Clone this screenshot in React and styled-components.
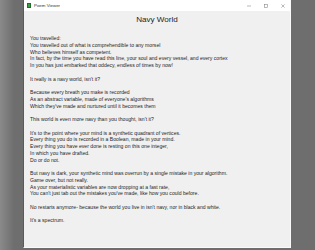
import styled, { createGlobalStyle } from "styled-components";

const GlobalStyle = createGlobalStyle`
  html, body {
    margin: 0;
    padding: 0;
    overflow: hidden;
  }
  body {
    font-family: "Liberation Sans", Arial, sans-serif;
  }
`

const Desktop = styled.div`
  width: 315px;
  height: 250px;
  display: flex;
  align-items: flex-start;
  background: linear-gradient(90deg, #8a8a8a 0px, #6e6e6e 14px, #6e6e6e 100%);
`

const Window = styled.div`
  margin-left: 23px;
  width: 268px;
  height: 248px;
  display: flex;
  flex-direction: column;
  background: #f0f0f0;
  box-sizing: border-box;
  border-right: 1px solid #fafafa;
  border-bottom: 1px solid #fafafa;
  border-left: 1px solid #5a5a5a;
`

const TitleBar = styled.div`
  height: 11px;
  flex: none;
  background: #ffffff;
  display: flex;
  align-items: center;
  padding-left: 3px;
  gap: 3px;
`

const AppIcon = styled.span`
  width: 4px;
  height: 5px;
  background: #3d9b45;
  border: 0.5px solid #1f6e2a;
  box-sizing: border-box;
`

const WindowTitle = styled.span`
  font-size: 4.4px;
  color: #333;
  flex: 1;
`

const Controls = styled.div`
  display: flex;
  align-items: center;
  height: 100%;
  margin-right: -1px;
`

const ControlButton = styled.span`
  width: 17px;
  height: 100%;
  display: flex;
  align-items: center;
  justify-content: center;
`

const Content = styled.div`
  flex: 1;
  padding: 4px 6px 0 6px;
  display: flex;
  flex-direction: column;
`

const Heading = styled.h1`
  margin: 0 0 10px 0;
  font-size: 8.1px;
  line-height: 10px;
  font-weight: normal;
  color: #1e1e1e;
  text-align: center;
`

const Poem = styled.div`
  font-size: 5.1px;
  line-height: 6.76px;
  color: #1e1e1e;
  white-space: pre;
`

const Line = styled.div`
  height: 6.76px;
`

const lines = [
  "You travelled:",
  "You travelled out of what is comprehendible to any morsel",
  "Who believes himself as competent.",
  "In fact, by the time you have read this line, your soul and every vessel, and every cortex",
  "In you has just embarked that oddecy, endless of times by now!",
  "",
  "It really is a navy world, isn't it?",
  "",
  "Because every breath you make is recorded",
  "As an abstract variable, made of everyone's algorithms",
  "Which they've made and nurtured until it becomes them",
  "",
  "This world is even more navy than you thought, isn't it?",
  "",
  "It's to the point where your mind is a synthetic quadrant of vertices.",
  "Every thing you do is recorded in a Boolean, made in your mind.",
  "Every thing you have ever done is resting on this one integer,",
  "In which you have drafted.",
  "Do or do not.",
  "",
  "But navy is dark, your synthetic mind was overrun by a single mistake in your algorithm.",
  "Game over, but not really.",
  "As your materialistic variables are now dropping at a fast rate,",
  "You can't just tab out the mistakes you've made, like how you could before.",
  "",
  "No restarts anymore- because the world you live in isn't navy, nor in black and white.",
  "",
  "It's a spectrum.",
]

function MinimizeIcon() {
  return (
    <svg width="4" height="4" viewBox="0 0 10 10">
      <line x1="0" y1="5" x2="10" y2="5" stroke="#8a8a8a" strokeWidth="1.5" />
    </svg>
  )
}

function MaximizeIcon() {
  return (
    <svg width="4" height="4" viewBox="0 0 10 10">
      <rect x="1" y="1" width="8" height="8" fill="none" stroke="#8a8a8a" strokeWidth="1.5" />
    </svg>
  )
}

function CloseIcon() {
  return (
    <svg width="4" height="4" viewBox="0 0 10 10">
      <path d="M1 1 L9 9 M9 1 L1 9" stroke="#8a8a8a" strokeWidth="1.5" />
    </svg>
  )
}

function App() {
  return (
    <Desktop>
      <GlobalStyle />
      <Window>
        <TitleBar>
          <AppIcon />
          <WindowTitle>Poem Viewer</WindowTitle>
          <Controls>
            <ControlButton><MinimizeIcon /></ControlButton>
            <ControlButton><MaximizeIcon /></ControlButton>
            <ControlButton><CloseIcon /></ControlButton>
          </Controls>
        </TitleBar>
        <Content>
          <Heading>Navy World</Heading>
          <Poem>
            {lines.map((l, i) => (
              <Line key={i}>{l}</Line>
            ))}
          </Poem>
        </Content>
      </Window>
    </Desktop>
  );
}

export default App;
